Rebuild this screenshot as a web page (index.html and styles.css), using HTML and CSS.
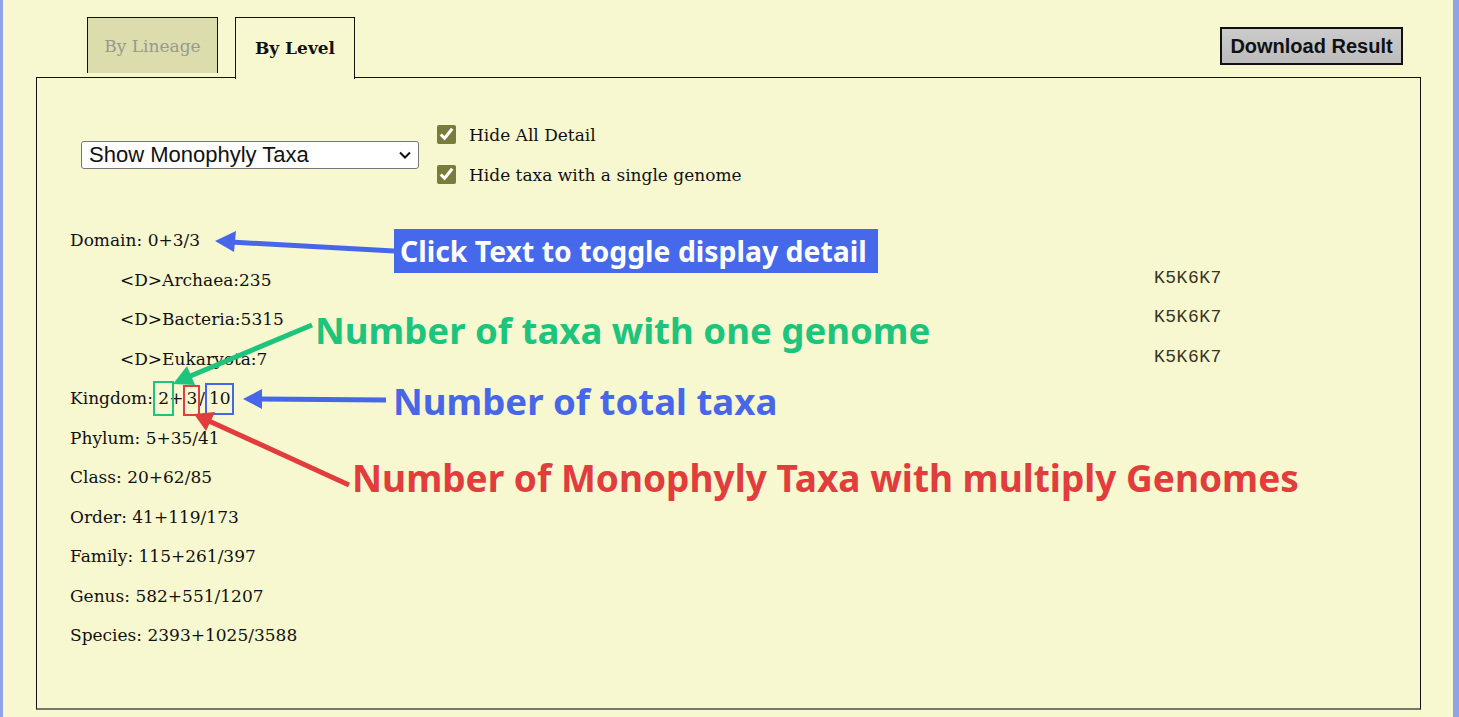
FILE: index.html
```html
<!DOCTYPE html>
<html>
<head>
<meta charset="utf-8">
<link rel="stylesheet" href="styles.css">
</head>
<body>
<div class="frame">
  <div class="header">
    <div class="tabs">
      <div class="tab tab-inactive">By Lineage</div>
      <div class="tab tab-active">By Level</div>
    </div>
    <button class="download">Download Result</button>
  </div>
  <div class="panel">
    <div class="controls">
      <div class="select-box">
        <span>Show Monophyly Taxa</span>
        <svg class="chev" width="14" height="10" viewBox="0 0 14 10"><path d="M2 2.5 L7 7.5 L12 2.5" fill="none" stroke="#111" stroke-width="2"/></svg>
      </div>
      <div class="checks">
        <label class="check"><input type="checkbox" checked> Hide All Detail</label>
        <label class="check"><input type="checkbox" checked> Hide taxa with a single genome</label>
      </div>
    </div>
    <div class="levels">
      <div class="row">Domain: 0+3/3</div>
      <div class="row child"><span class="name">&lt;D&gt;Archaea:235</span><span class="code">K5K6K7</span></div>
      <div class="row child"><span class="name">&lt;D&gt;Bacteria:5315</span><span class="code">K5K6K7</span></div>
      <div class="row child"><span class="name">&lt;D&gt;Eukaryota:7</span><span class="code">K5K6K7</span></div>
      <div class="row">Kingdom: <span class="hl hl-g">2</span>+<span class="hl hl-r">3</span>/<span class="hl hl-b">10</span></div>
      <div class="row">Phylum: 5+35/41</div>
      <div class="row">Class: 20+62/85</div>
      <div class="row">Order: 41+119/173</div>
      <div class="row">Family: 115+261/397</div>
      <div class="row">Genus: 582+551/1207</div>
      <div class="row">Species: 2393+1025/3588</div>
    </div>
  </div>
</div>

<svg class="overlay" width="1459" height="717" viewBox="0 0 1459 717">
  <line x1="391" y1="251" x2="228" y2="242" stroke="#4866e8" stroke-width="5"/>
  <polygon points="212,241 233,231 231,252" fill="#4866e8"/>
  <line x1="309" y1="325" x2="185" y2="377" stroke="#1cc47c" stroke-width="5"/>
  <polygon points="170,384 184,366 192,385" fill="#1cc47c"/>
  <line x1="383" y1="400" x2="256" y2="399" stroke="#4866e8" stroke-width="5"/>
  <polygon points="240,399 259,389 259,409" fill="#4866e8"/>
  <line x1="346" y1="485" x2="206" y2="421" stroke="#e23c3c" stroke-width="5"/>
  <polygon points="191,414 212,412 203,431" fill="#e23c3c"/>
</svg>
<div class="note note-click">Click Text to toggle display detail</div>
<div class="note note-green">Number of taxa with one genome</div>
<div class="note note-blue">Number of total taxa</div>
<div class="note note-red">Number of Monophyly Taxa with multiply Genomes</div>
</body>
</html>
```
FILE: styles.css
```css
html, body {
  margin: 0;
  padding: 0;
}
body {
  width: 1459px;
  height: 717px;
  overflow: hidden;
  background: #f7f8d0;
  position: relative;
  font-family: "DejaVu Serif", Georgia, serif;
  color: #111;
  box-sizing: border-box;
  border-left: 3px solid #8ea4e6;
  border-right: 6px solid #8ea4e6;
}
.frame {
  padding: 17px 0 0 33px;
  width: 1384px;
}
.header {
  display: flex;
  align-items: flex-start;
  justify-content: space-between;
  height: 60px;
}
.tabs {
  display: flex;
  align-items: flex-start;
  gap: 17px;
  padding-left: 51px;
}
.tab {
  box-sizing: border-box;
  border: 1px solid #111;
  border-bottom: none;
  display: flex;
  align-items: center;
  justify-content: center;
  font-size: 17px;
}
.tab-inactive {
  width: 131px;
  height: 56px;
  background: #dcdcac;
  color: #999990;
}
.tab-active {
  width: 120px;
  height: 62px;
  background: #f7f8d0;
  font-weight: bold;
  color: #111;
  position: relative;
  z-index: 2;
  padding-bottom: 1px;
}
.download {
  margin-top: 10px;
  margin-right: 17px;
  width: 183px;
  height: 38px;
  border: 2px solid #111;
  background: linear-gradient(#cbcbcb, #bcbcbc);
  font-family: "Liberation Sans", Arial, sans-serif;
  font-weight: bold;
  font-size: 20px;
  color: #111;
  padding: 0;
}
.panel {
  box-sizing: border-box;
  border: 1px solid #111;
  border-bottom: 2px solid #777766;
  height: 633px;
  width: 1385px;
  padding: 44px 0 0 33px;
}
.controls {
  display: flex;
  align-items: center;
  gap: 18px;
  padding-left: 11px;
}
.select-box {
  box-sizing: border-box;
  width: 338px;
  height: 28px;
  background: #fff;
  border: 1px solid #777;
  border-radius: 3px;
  display: flex;
  align-items: center;
  justify-content: space-between;
  padding: 0 6px 0 7px;
  font-family: "Liberation Sans", Arial, sans-serif;
  font-size: 22px;
  color: #111;
  margin-top: 1px;
}
.checks {
  display: flex;
  flex-direction: column;
  gap: 15px;
}
.check {
  display: flex;
  align-items: center;
  gap: 13px;
  font-size: 17px;
  height: 25px;
}
.check input {
  margin: 0;
  width: 19px;
  height: 19px;
  accent-color: #7b7b3c;
}
.levels {
  margin-top: 34px;
  font-size: 17px;
}
.row {
  height: 39.5px;
  line-height: 39.5px;
  white-space: nowrap;
}
.child {
  display: flex;
  padding-left: 50px;
}
.child .name {
  width: 1034px;
}
.code {
  font-family: "Liberation Mono", "Courier New", monospace;
  font-size: 18px;
  letter-spacing: 0.5px;
  color: #3a3320;
  position: relative;
  top: -2px;
}
.hl {
  position: relative;
}
.hl::after {
  content: "";
  position: absolute;
  top: -7px;
  bottom: -8px;
  border: 2.5px solid;
}
.hl-g::after {
  border-color: #1cc47c;
  left: -5px;
  right: -5px;
}
.hl-r {
  margin: 0 2px 0 3px;
}
.hl-r::after {
  border-color: #e23c3c;
  left: -3px;
  right: -3px;
  top: -3px;
  bottom: -8px;
}
.hl-b {
  margin-left: 4px;
}
.hl-b::after {
  border-color: #4866e8;
  left: -4px;
  right: -3px;
  top: -5px;
  bottom: -7px;
}
.overlay {
  position: absolute;
  left: 0;
  top: 0;
  pointer-events: none;
}
.note {
  position: absolute;
  font-family: "Noto Sans", "Open Sans", sans-serif;
  font-weight: bold;
  white-space: nowrap;
  line-height: 1;
}
.note-click {
  left: 391px;
  top: 229px;
  width: 484px;
  height: 44px;
  box-sizing: border-box;
  background: #4669ec;
  color: #fff;
  font-size: 28.4px;
  padding: 8px 0 0 6px;
}
.note-green {
  left: 312px;
  top: 312px;
  font-size: 36.6px;
  color: #1cc47c;
}
.note-blue {
  left: 390px;
  top: 383px;
  font-size: 36.6px;
  color: #4866e8;
}
.note-red {
  left: 349px;
  top: 459px;
  font-size: 37px;
  color: #e23c3c;
}
```
